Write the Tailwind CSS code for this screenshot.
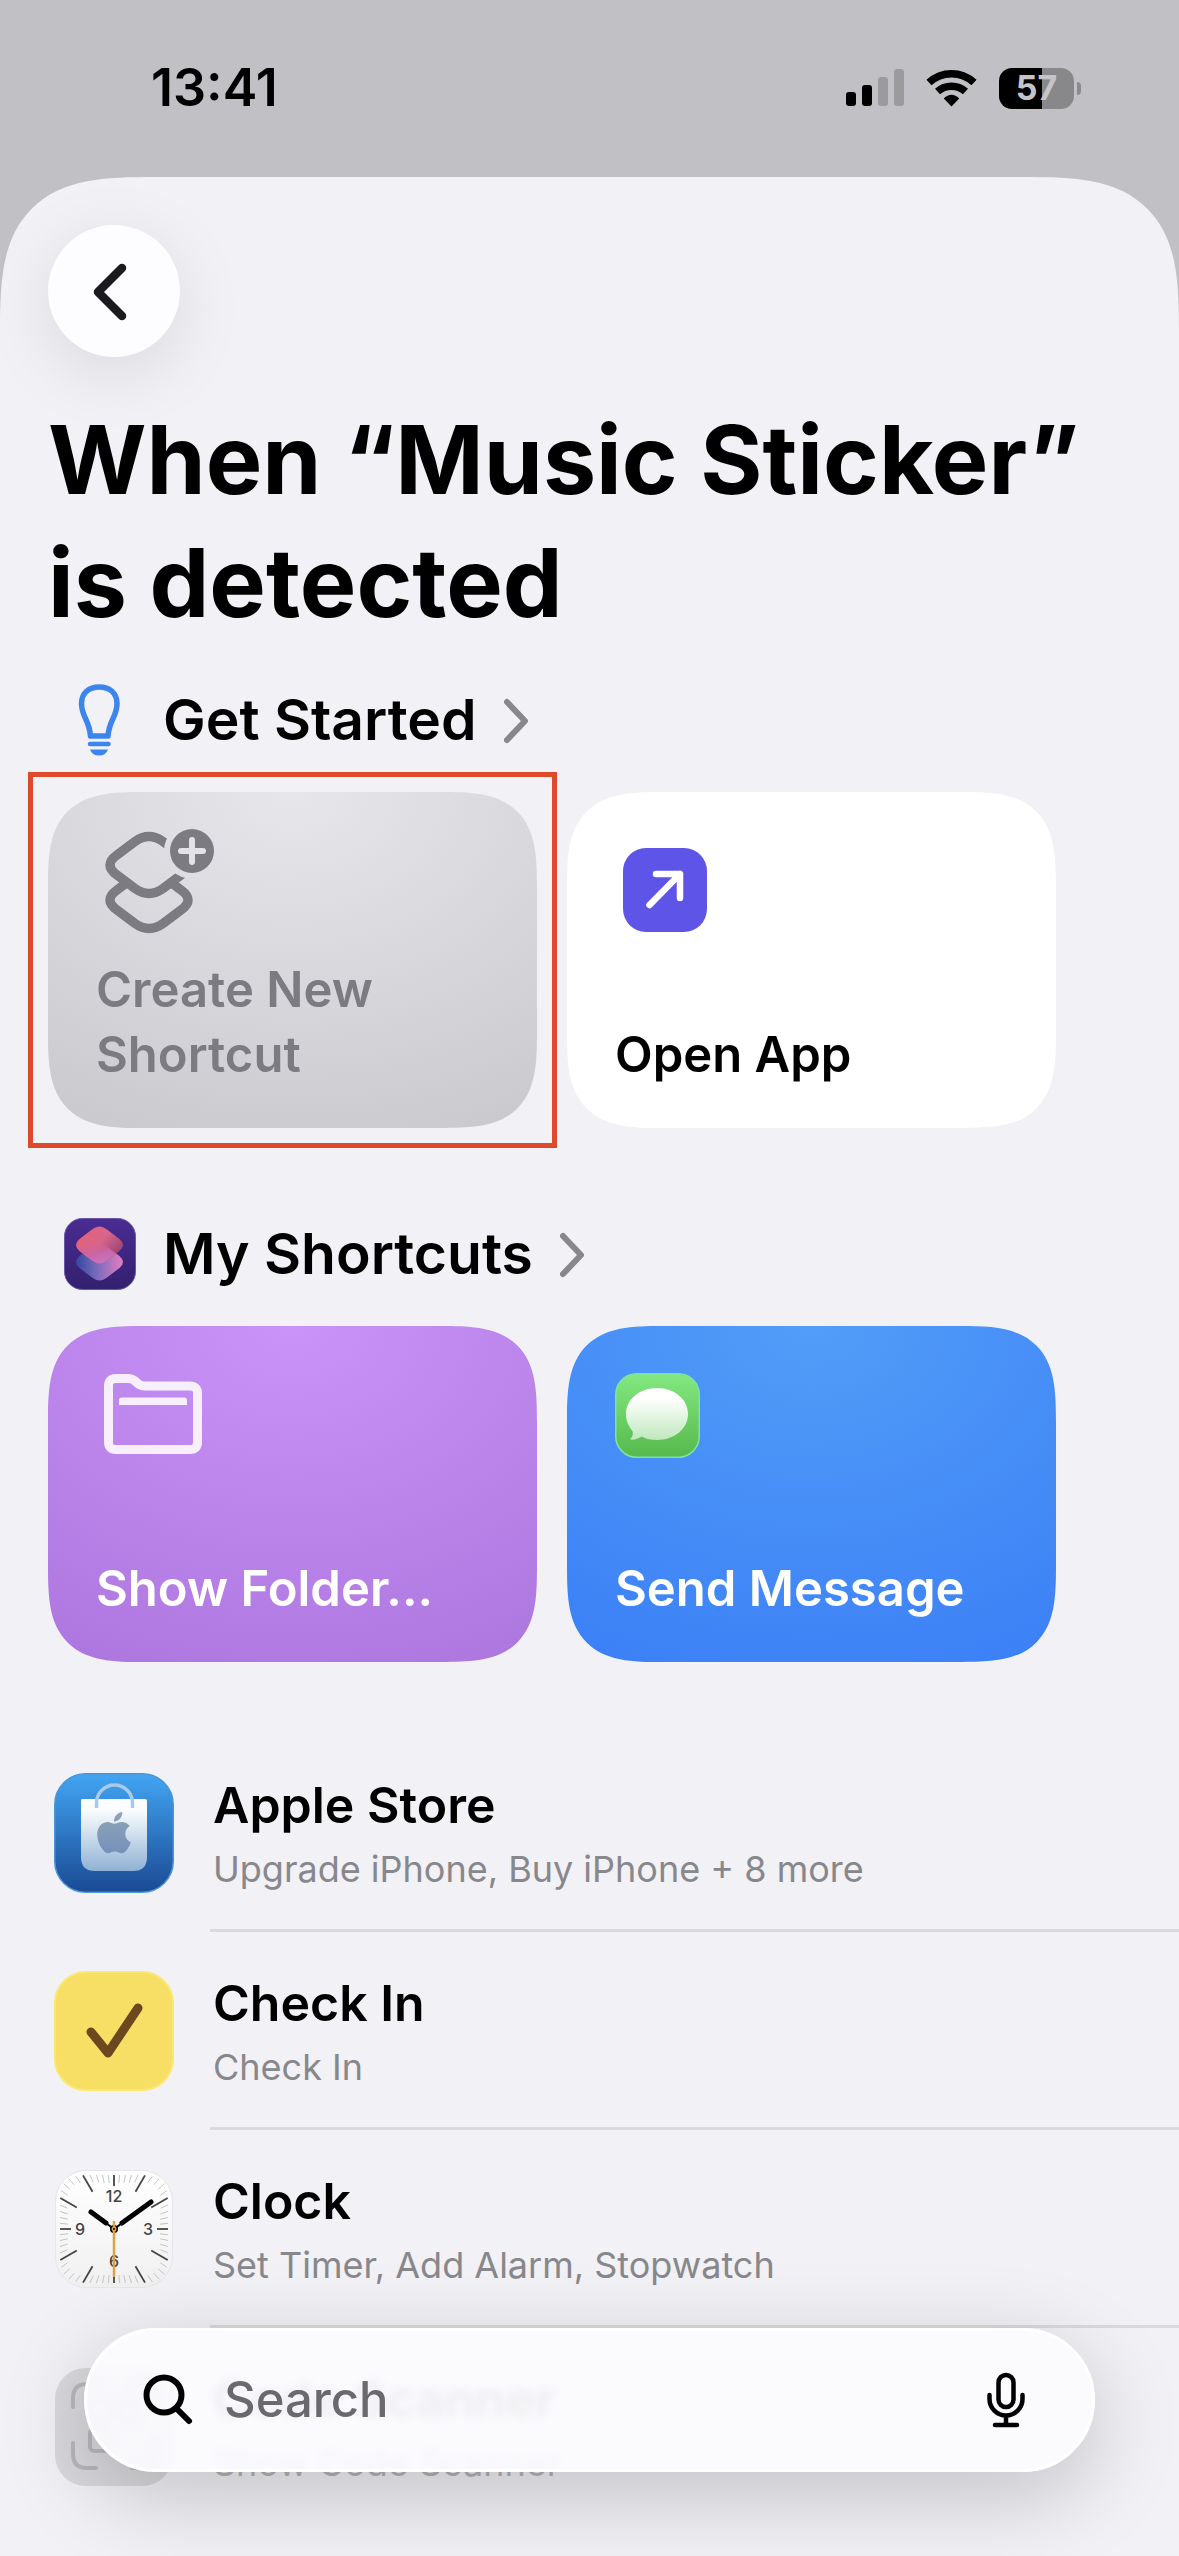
<!DOCTYPE html>
<html lang="en">
<head>
<meta charset="utf-8">
<meta name="viewport" content="width=device-width, initial-scale=1">
<title>When “Music Sticker” is detected</title>
<script src="https://cdn.jsdelivr.net/npm/@tailwindcss/browser@4"></script>
</head>
<body class="bg-[#c1c0c5] font-['Inter',sans-serif] text-black">
<div class="flex min-h-screen flex-col overflow-hidden">

  <header class="flex h-[177px] shrink-0 items-start justify-between pt-[56px] pr-[98px] pl-[151px]">
    <time class="text-[52px] leading-[64px] font-semibold">13:41</time>
    <div class="flex h-[64px] items-center gap-[22px]">
      <svg class="h-[38px] w-[58px]" viewBox="0 0 58 38" aria-label="Signal">
        <rect x="0" y="23" width="10" height="14" rx="3"/>
        <rect x="16" y="16" width="10" height="21" rx="3"/>
        <rect x="32" y="8" width="10" height="29" rx="3" fill="#9b9b9d"/>
        <rect x="48" y="0" width="10" height="37" rx="3" fill="#9b9b9d"/>
      </svg>
      <svg class="h-[38px] w-[51px]" viewBox="0 0 51 38" aria-label="Wi-Fi">
        <path d="M3 13.500A33 33 0 0 1 48 13.500" fill="none" stroke="#000" stroke-width="7.500"/>
        <path d="M11.500 22.500A21 21 0 0 1 39.500 22.500" fill="none" stroke="#000" stroke-width="7.500"/>
        <path d="M25.500 37.500L17.800 29.500Q25.500 22 33.200 29.500Z"/>
      </svg>
      <div class="flex items-center gap-[3px]">
        <div class="flex h-[41px] w-[75px] items-center justify-center rounded-[13px] bg-linear-to-r from-black from-57% to-[#88888a] to-57% text-[34px] leading-none font-bold text-[#c5c4c9]">57</div>
        <div class="h-[13px] w-[4px] rounded-r-full bg-[#8b8b8e]"></div>
      </div>
    </div>
  </header>

  <main class="grow rounded-t-[112px] bg-[#f1f1f6] pt-[48px] pb-[32px] [corner-shape:superellipse(1.6)] supports-[corner-shape:squircle]:rounded-t-[155px]">
    <div class="pr-12 pl-12">
      <button type="button" aria-label="Back" class="flex size-[132px] items-center justify-center rounded-full bg-[#fdfdff] shadow-[0_16px_70px_rgba(0,0,0,0.1)]">
        <svg class="size-[132px]" viewBox="0 0 132 132" fill="none" stroke="#1b1b1f" stroke-width="8.500" stroke-linecap="round" stroke-linejoin="round"><path d="M74 43L50 67L74 91"/></svg>
      </button>
      <h1 class="mt-[41px] text-[95px] leading-[123px] font-bold">When “Music Sticker” is detected</h1>
    </div>

    <section class="mt-10 pr-[123px] pl-12">
      <h2>
        <a href="#get-started" class="flex h-[72px] items-center gap-[27px] px-4 text-[57px] leading-[72px] font-semibold">
          <svg class="size-[72px]" viewBox="0 0 72 72" fill="none" stroke="#3d85ee" stroke-width="5.500">
            <path d="M26.500 52C25.500 36 17.500 33 17.500 19.500C17.500 9 25 3 35.200 3C45.500 3 53 9 53 19.500C53 33 45 36 44 52Z" stroke-linejoin="round"/>
            <path d="M26 60H44.500" stroke-width="4.500" stroke-linecap="round"/>
            <path d="M26 65.500H44Q42 71.500 35 71.500T26 65.500Z" fill="#3d85ee" stroke="none"/>
          </svg>
          <span>Get Started</span>
          <svg class="h-[48px] w-[32px]" viewBox="0 0 32 48" fill="none" stroke="#88888c" stroke-width="6" stroke-linecap="round" stroke-linejoin="round"><path d="M3 6L21 25L3 44"/></svg>
        </a>
      </h2>
      <div class="mt-9 grid grid-cols-2 gap-[30px]">
        <div class="relative">
          <button type="button" class="flex h-[336px] w-full flex-col items-start justify-between rounded-[70px] bg-radial-[100%_110%_at_50%_0%] from-[#e7e7eb] to-[#c9c9ce] px-12 pt-9 pb-[41px] text-left text-[49px] leading-[65px] font-semibold text-[#7b7b81] [corner-shape:superellipse(1.6)] supports-[corner-shape:squircle]:rounded-[96px]">
            <svg class="h-[108px] w-[120px]" viewBox="0 0 120 108" fill="none" stroke="#7b7b81" stroke-width="9.500">
              <mask id="below-top-layer" maskUnits="userSpaceOnUse" x="0" y="0" width="120" height="108">
                <rect width="120" height="108" fill="#fff" stroke="none"/>
                <path d="M39 13.500Q53 3.500 67 13.500L85 27Q99 37 85 47L67 60.500Q53 70.500 39 60.500L21 47Q7 37 21 27Z" fill="#000" stroke="none"/>
              </mask>
              <mask id="badge-gap" maskUnits="userSpaceOnUse" x="0" y="0" width="120" height="108">
                <rect width="120" height="108" fill="#fff" stroke="none"/>
                <circle cx="96" cy="23" r="28" fill="#000" stroke="none"/>
              </mask>
              <path mask="url(#below-top-layer)" d="M39 48.500Q53 38.500 67 48.500L85 62Q99 72 85 82L67 95.500Q53 105.500 39 95.500L21 82Q7 72 21 62Z"/>
              <path mask="url(#badge-gap)" d="M39 13.500Q53 3.500 67 13.500L85 27Q99 37 85 47L67 60.500Q53 70.500 39 60.500L21 47Q7 37 21 27Z"/>
              <circle cx="96" cy="23" r="22" fill="#7b7b81" stroke="none"/>
              <path d="M85 23H107M96 12V34" stroke="#e3e3e7" stroke-width="6" stroke-linecap="round"/>
            </svg>
            <span>Create New Shortcut</span>
          </button>
          <div class="pointer-events-none absolute -inset-5 border-5 border-[#de4a2c]"></div>
        </div>
        <button type="button" class="flex h-[336px] w-full flex-col items-start justify-between rounded-[70px] bg-white px-12 pt-9 pb-[41px] text-left text-[49px] leading-[65px] font-semibold [corner-shape:superellipse(1.6)] supports-[corner-shape:squircle]:rounded-[96px]">
          <svg class="h-[108px] w-[120px]" viewBox="0 0 120 108" fill="none" stroke="#fff" stroke-width="6.500" stroke-linecap="round" stroke-linejoin="round">
            <rect x="8" y="20" width="84" height="84" rx="23" fill="#5f54e8" stroke="none"/>
            <path d="M41 46H65V70M65 46L34.500 77"/>
          </svg>
          <span>Open App</span>
        </button>
      </div>
    </section>

    <section class="mt-[90px] pr-[123px] pl-12">
      <h2>
        <a href="#my-shortcuts" class="flex h-[72px] items-center gap-[27px] px-4 text-[57px] leading-[72px] font-semibold">
          <svg class="size-[72px]" viewBox="0 0 72 72">
            <defs>
              <linearGradient id="sc-bg" x2="0" y2="1"><stop stop-color="#4b2c92"/><stop offset="1" stop-color="#33206f"/></linearGradient>
              <linearGradient id="sc-top" x1="0.200" x2="1" y2="0.600"><stop stop-color="#e2627a"/><stop offset="0.500" stop-color="#d8658a"/><stop offset="1" stop-color="#9c4573"/></linearGradient>
              <linearGradient id="sc-low" x2="1" y2="0"><stop stop-color="#35479f"/><stop offset="0.450" stop-color="#7a6cbc"/><stop offset="1" stop-color="#e67cc0"/></linearGradient>
              <linearGradient id="sc-mid" x2="0.400" y2="1"><stop stop-color="#dd6386" stop-opacity="0"/><stop offset="0.600" stop-color="#c866a8"/><stop offset="1" stop-color="#c873bd"/></linearGradient>
            </defs>
            <rect x="0.500" y="0.500" width="71" height="71" rx="18" fill="url(#sc-bg)" stroke="#6a55a6"/>
            <path d="M28 28.500Q35.500 22.500 43 28.500L55.500 38Q62.500 44 55.500 50L43 59.500Q35.500 65.500 28 59.500L15.500 50Q8.500 44 15.500 38Z" fill="url(#sc-low)"/>
            <path d="M28 11.500Q35.500 5.500 43 11.500L55.500 21Q62.500 27 55.500 33L43 42.500Q35.500 48.500 28 42.500L15.500 33Q8.500 27 15.500 21Z" fill="url(#sc-top)"/>
            <path d="M28 26Q38 25 43 28.500L52 35.500L43 42.500Q35.500 48.500 28 42.500L15.500 33Z" fill="url(#sc-mid)"/>
          </svg>
          <span>My Shortcuts</span>
          <svg class="h-[48px] w-[32px]" viewBox="0 0 32 48" fill="none" stroke="#88888c" stroke-width="6" stroke-linecap="round" stroke-linejoin="round"><path d="M3 6L21 25L3 44"/></svg>
        </a>
      </h2>
      <div class="mt-9 grid grid-cols-2 gap-[30px]">
        <button type="button" class="flex h-[336px] w-full flex-col items-start justify-between rounded-[70px] bg-radial-[100%_110%_at_50%_0%] from-[#c993f9] to-[#ae77df] px-12 pt-9 pb-[41px] text-left text-[49px] leading-[65px] font-semibold text-white [corner-shape:superellipse(1.6)] supports-[corner-shape:squircle]:rounded-[96px]">
          <svg class="h-[108px] w-[120px]" viewBox="0 0 120 108" fill="none" stroke="#f8effd" stroke-width="9" stroke-linejoin="round">
            <path d="M12.500 24Q12.500 16.500 20 16.500H32Q36 16.500 39 19L42.500 22Q45 24 49 24H94Q101.500 24 101.500 31.500V80Q101.500 87.500 94 87.500H20Q12.500 87.500 12.500 80Z"/>
            <path d="M23 43V38Q23 35.500 26 35.500H88Q91 35.500 91 38V43Z" fill="#f8effd" stroke="none"/>
          </svg>
          <span>Show Folder...</span>
        </button>
        <button type="button" class="flex h-[336px] w-full flex-col items-start justify-between rounded-[70px] bg-radial-[100%_110%_at_50%_0%] from-[#529df8] to-[#3c80f6] px-12 pt-9 pb-[41px] text-left text-[49px] leading-[65px] font-semibold text-white [corner-shape:superellipse(1.6)] supports-[corner-shape:squircle]:rounded-[96px]">
          <svg class="h-[108px] w-[120px]" viewBox="0 0 120 108">
            <defs>
              <linearGradient id="ms-bg" x2="0" y2="1"><stop stop-color="#83e880"/><stop offset="1" stop-color="#56b94d"/></linearGradient>
              <linearGradient id="ms-bubble" x2="0" y2="1"><stop offset="0.200" stop-color="#fff"/><stop offset="1" stop-color="#bfe8bd"/></linearGradient>
            </defs>
            <rect x="0.750" y="11.750" width="83.500" height="83.500" rx="21" fill="url(#ms-bg)" stroke="#7fe3a0" stroke-width="1.500"/>
            <path d="M42 26C59 26 73 37 73 52S59 78 42 78C36 78 31 77 26.500 74.500C23 77 19 78 15 77.500C17.500 75 18.500 72 17.500 69C13 64 11 58 11 52C11 37 25 26 42 26Z" fill="url(#ms-bubble)"/>
          </svg>
          <span>Send Message</span>
        </button>
      </div>
    </section>

    <ul class="mt-[72px] pl-[54px]">
      <li>
        <a href="#apple-store" class="flex h-[198px] items-center gap-9">
          <svg class="size-[120px] shrink-0" viewBox="0 0 120 120">
            <defs>
              <linearGradient id="as-bg" x2="0" y2="1"><stop stop-color="#42a5f3"/><stop offset="1" stop-color="#1b4a94"/></linearGradient>
              <linearGradient id="as-bag" x2="0" y2="1"><stop offset="0.150" stop-color="#fbfdff"/><stop offset="1" stop-color="#8fb2d4"/></linearGradient>
              <linearGradient id="as-logo" x2="0" y2="1"><stop stop-color="#8fa4b6"/><stop offset="1" stop-color="#7790bb"/></linearGradient>
            </defs>
            <rect x="0.750" y="0.750" width="118.500" height="118.500" rx="31" fill="url(#as-bg)" stroke="#4b94d8" stroke-width="1.500"/>
            <path d="M28 26H91Q93 26 93 28V84Q93 98 79 98H41Q27 98 27 84V28Q27 26 28 26Z" fill="url(#as-bag)"/>
            <path d="M42.500 35V30A17.500 17.500 0 0 1 78.500 30V35" fill="none" stroke="#a9cbe9" stroke-width="3.500"/>
            <path transform="translate(39.400 39) scale(1.720)" fill="url(#as-logo)" d="M12.152 6.896c-.948 0-2.415-1.078-3.960-1.040-2.040.027-3.910 1.183-4.961 3.014-2.117 3.675-.546 9.103 1.519 12.090 1.013 1.454 2.208 3.090 3.792 3.039 1.520-.065 2.090-.987 3.935-.987 1.831 0 2.350.987 3.960.948 1.637-.026 2.676-1.480 3.676-2.948 1.156-1.688 1.636-3.325 1.662-3.415-.039-.013-3.182-1.221-3.220-4.857-.026-3.040 2.480-4.494 2.597-4.559-1.429-2.090-3.623-2.324-4.390-2.376-2-.156-3.675 1.090-4.610 1.090zM15.530 3.830c.843-1.012 1.400-2.427 1.245-3.830-1.207.052-2.662.805-3.532 1.818-.780.896-1.454 2.338-1.273 3.714 1.338.104 2.715-.688 3.559-1.701"/>
          </svg>
          <span class="flex h-full grow flex-col justify-center gap-2 border-b-3 border-[#dadade] pt-[3px] pl-[3px]">
            <span class="text-[50px] leading-[64px] font-semibold">Apple Store</span>
            <span class="text-[36px] leading-[48px] text-[#88888c]">Upgrade iPhone, Buy iPhone + 8 more</span>
          </span>
        </a>
      </li>
      <li>
        <a href="#check-in" class="flex h-[198px] items-center gap-9">
          <svg class="size-[120px] shrink-0" viewBox="0 0 120 120">
            <rect x="1" y="1" width="118" height="118" rx="31" fill="#f7df66" stroke="#fbe873" stroke-width="2"/>
            <path d="M37 61L54 82L84 37" fill="none" stroke="#6b481d" stroke-width="9" stroke-linecap="round" stroke-linejoin="round"/>
          </svg>
          <span class="flex h-full grow flex-col justify-center gap-2 border-b-3 border-[#dadade] pt-[3px] pl-[3px]">
            <span class="text-[50px] leading-[64px] font-semibold">Check In</span>
            <span class="text-[36px] leading-[48px] text-[#88888c]">Check In</span>
          </span>
        </a>
      </li>
      <li>
        <a href="#clock" class="flex h-[198px] items-center gap-9">
          <svg class="size-[120px] shrink-0" viewBox="-60 -60 120 120">
            <defs><linearGradient id="ck-bg" x2="0" y2="1"><stop stop-color="#fff"/><stop offset="1" stop-color="#f0f0f1"/></linearGradient></defs>
            <rect x="-58.500" y="-58.500" width="117" height="117" rx="31" fill="url(#ck-bg)" stroke="#e6e6e9"/>
            <g id="ticks"></g>
            <g fill="#444" font-size="16" font-weight="500" text-anchor="middle">
              <text x="0" y="-27">12</text><text x="34" y="6">3</text><text x="0" y="38">6</text><text x="-34" y="6">9</text>
            </g>
            <g stroke="#000" stroke-linecap="round" fill="none">
              <path d="M0 0L-23 -17M0 0L37 -27" stroke-width="2"/>
              <path d="M-8 -6L-23 -17M8 -6L37 -27" stroke-width="5"/>
            </g>
            <circle r="4" fill="#000"/>
            <path d="M0 -8V48" stroke="#e0a045" stroke-width="2.500"/>
            <circle r="2.500" fill="#e0a045"/><circle r="1" fill="#000"/>
          </svg>
          <span class="flex h-full grow flex-col justify-center gap-2 border-b-3 border-[#dadade] pt-[3px] pl-[3px]">
            <span class="text-[50px] leading-[64px] font-semibold">Clock</span>
            <span class="text-[36px] leading-[48px] text-[#88888c]">Set Timer, Add Alarm, Stopwatch</span>
          </span>
        </a>
      </li>
      <li>
        <a href="#code-scanner" class="flex h-[198px] items-center gap-9">
          <svg class="size-[120px] shrink-0" viewBox="0 0 120 120" fill="none" stroke="#b9b9bd" stroke-width="4" stroke-linecap="round">
            <rect x="1" y="1" width="118" height="118" rx="31" fill="#d9d9dd" stroke="none"/>
            <path d="M19 40V31Q19 17 33 17H42M78 17H87Q101 17 101 31V40M101 76V87Q101 101 87 101H78M42 101H33Q19 101 19 87V76"/>
            <rect x="36" y="34" width="20" height="20" rx="4"/><rect x="64" y="34" width="20" height="20" rx="4"/><rect x="36" y="62" width="20" height="22" rx="4"/>
          </svg>
          <span class="flex h-full grow flex-col justify-center gap-2 pl-[3px]">
            <span class="text-[50px] leading-[64px] font-semibold text-black/60">Code Scanner</span>
            <span class="text-[36px] leading-[48px] text-[#b4b4b8]">Show Code Scanner</span>
          </span>
        </a>
      </li>
    </ul>
  </main>
</div>

<form role="search" class="fixed inset-x-[84px] bottom-[84px] flex h-[144px] items-center rounded-full border-3 border-white bg-[#fcfcff]/90 pr-[64px] pl-[54px] shadow-[0_24px_90px_rgba(0,0,0,0.2)] backdrop-blur-[5px]">
  <svg class="size-[56px] shrink-0" viewBox="0 0 56 56" fill="none" stroke="#000" stroke-width="6" stroke-linecap="round"><circle cx="23" cy="23" r="17.500"/><path d="M36 37L48 49"/></svg>
  <label for="search" class="sr-only">Search</label>
  <input id="search" type="search" placeholder="Search" class="ml-[27px] min-w-0 grow bg-transparent text-[49px] leading-[64px] font-medium outline-none placeholder:text-[#6a6a6e]">
  <button type="button" aria-label="Dictate" class="shrink-0">
    <svg class="h-[60px] w-[44px]" viewBox="0 0 44 60" fill="none" stroke="#000" stroke-width="4.500" stroke-linecap="round">
      <rect x="14.500" y="5" width="15" height="32" rx="7.500"/>
      <path d="M5.500 25V29A16.500 16.500 0 0 0 38.500 29V25M22 46V55M11 55H33"/>
    </svg>
  </button>
</form>

<script>
  // Minute and hour marks run along the rounded-square edge of the dial.
  const ticks = document.getElementById('ticks');
  for (let i = 0; i < 60; i++) {
    const a = i * Math.PI / 30, s = Math.sin(a), c = Math.cos(a);
    const r = 54 / Math.pow(Math.pow(Math.abs(s), 6) + Math.pow(Math.abs(c), 6), 1 / 6);
    const hour = i % 5 === 0;
    const inner = r - (i % 15 === 0 ? 11 : hour ? 19 : 8);
    const line = document.createElementNS('http://www.w3.org/2000/svg', 'line');
    line.setAttribute('x1', s * r);
    line.setAttribute('y1', -c * r);
    line.setAttribute('x2', s * inner);
    line.setAttribute('y2', -c * inner);
    line.setAttribute('stroke', hour ? '#444' : '#c4c4c6');
    line.setAttribute('stroke-width', hour ? 1.8 : 1);
    ticks.appendChild(line);
  }
</script>
</body>
</html>
